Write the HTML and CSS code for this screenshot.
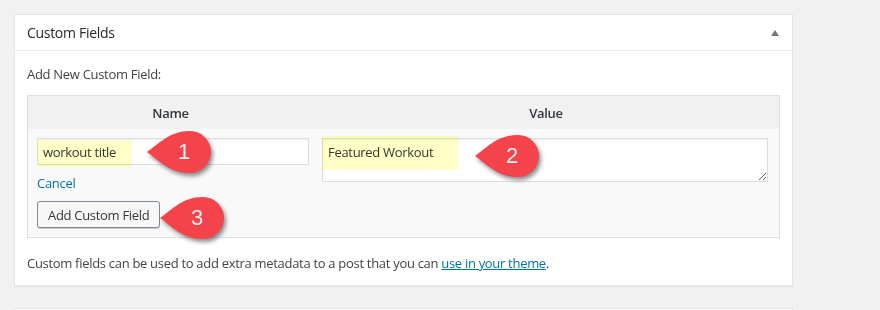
FILE: index.html
```html
<!DOCTYPE html>
<html lang="en">
<head>
    <meta charset="UTF-8">
    <title>Custom Fields</title>
    <link rel="stylesheet" href="styles.css">
</head>
<body>
    <div class="postbox">
        <div class="hndle">
            <h2>Custom Fields</h2>
            <span class="toggle"></span>
        </div>
        <div class="inside">
            <p class="add-label">Add New Custom Field:</p>
            <table class="newmeta">
                <thead>
                    <tr>
                        <th class="col-name">Name</th>
                        <th class="col-value">Value</th>
                    </tr>
                </thead>
                <tbody>
                    <tr>
                        <td class="col-name">
                            <input type="text" class="meta-key" value="workout title">
                            <a href="#" class="cancel">Cancel</a>
                            <button class="button">Add Custom Field</button>
                        </td>
                        <td class="col-value">
                            <textarea class="meta-value">Featured Workout</textarea>
                        </td>
                    </tr>
                </tbody>
            </table>
            <p class="note">Custom fields can be used to add extra metadata to a post that you can <a href="#">use in your theme</a>.</p>
        </div>

        <!-- annotations drawn over the screenshot -->
        <div class="hl hl-1"></div>
        <div class="hl hl-2"></div>
        <div class="callout callout-1">
            <svg viewBox="0 0 64 42" width="64" height="42"><path d="M0 21 C12 13 22 0 43 0 A21 21 0 0 1 43 42 C22 42 12 29 0 21 Z"/></svg>
            <span>1</span>
        </div>
        <div class="callout callout-2">
            <svg viewBox="0 0 64 42" width="64" height="42"><path d="M0 21 C12 13 22 0 43 0 A21 21 0 0 1 43 42 C22 42 12 29 0 21 Z"/></svg>
            <span>2</span>
        </div>
        <div class="callout callout-3">
            <svg viewBox="0 0 64 42" width="64" height="42"><path d="M0 21 C12 13 22 0 43 0 A21 21 0 0 1 43 42 C22 42 12 29 0 21 Z"/></svg>
            <span>3</span>
        </div>
    </div>
    <div class="postbox next"></div>
</body>
</html>
```

FILE: styles.css
```css
body {
    margin: 0;
    padding: 14px 0 0 14px;
    background: #f1f1f1;
    font-family: 'Open Sans', sans-serif;
    font-size: 13px;
    letter-spacing: -0.3px;
    color: #444;
}
.postbox {
    position: relative;
    box-sizing: border-box;
    width: 779px;
    background: #fff;
    border: 1px solid #e5e5e5;
    box-shadow: 0 1px 1px rgba(0, 0, 0, 0.04);
}
.postbox.next {
    margin-top: 22px;
    height: 3px;
    border-bottom: 0;
}
.hndle {
    display: flex;
    align-items: center;
    justify-content: space-between;
    height: 35px;
    padding: 0 13px 0 12px;
    border-bottom: 1px solid #eee;
}
.hndle h2 {
    margin: 0;
    font-size: 14px;
    font-weight: 400;
    color: #23282d;
}
.toggle {
    width: 0;
    height: 0;
    border-left: 4px solid transparent;
    border-right: 4px solid transparent;
    border-bottom: 6px solid #72777c;
}
.inside {
    padding: 13px 12px 12px;
}
.add-label {
    margin: 0 0 11px;
    line-height: 20px;
}
.newmeta {
    width: 100%;
    border: 1px solid #dfdfdf;
    border-collapse: collapse;
    background: #f9f9f9;
}
.newmeta th {
    height: 33px;
    padding: 0;
    background: #f1f1f1;
    font-weight: 600;
    color: #32373c;
}
.newmeta th.col-name {
    width: 285px;
}
.newmeta td {
    vertical-align: top;
    padding: 9px 0 9px 9px;
}
.newmeta td.col-name {
    padding-right: 4px;
}
.newmeta td.col-value {
    padding-right: 11px;
}
.meta-key {
    display: block;
    box-sizing: border-box;
    width: 272px;
    height: 27px;
    margin: 0;
    padding: 2px 5px;
    border: 1px solid #ddd;
    box-shadow: inset 0 1px 2px rgba(0, 0, 0, 0.07);
    font: inherit;
    letter-spacing: inherit;
    color: #32373c;
}
.cancel {
    display: block;
    margin: 9px 0 9px;
    line-height: 18px;
    color: #0073aa;
    text-decoration: none;
}
.button {
    display: block;
    box-sizing: border-box;
    height: 27px;
    padding: 0 10px;
    border: 1px solid #7e8993;
    border-radius: 3px;
    background: #f7f7f7;
    box-shadow: 0 1px 0 #ccc;
    font: inherit;
    letter-spacing: inherit;
    color: #32373c;
    cursor: pointer;
}
.meta-value {
    display: block;
    box-sizing: border-box;
    width: 100%;
    height: 44px;
    margin: 0;
    padding: 4px 5px;
    border: 1px solid #ddd;
    box-shadow: inset 0 1px 2px rgba(0, 0, 0, 0.07);
    font: inherit;
    letter-spacing: inherit;
    color: #32373c;
}
.note {
    margin: 15px 0 0;
    line-height: 20px;
}
.note a {
    color: #0073aa;
}
.hl {
    position: absolute;
    background: rgba(255, 255, 0, 0.22);
    mix-blend-mode: multiply;
    pointer-events: none;
}
.hl-1 { left: 23px; top: 125px; width: 94px; height: 27px; }
.hl-2 { left: 307px; top: 121px; width: 136px; height: 34px; }
.callout {
    position: absolute;
    width: 64px;
    height: 42px;
}
.callout svg {
    display: block;
    fill: #f4434a;
    filter: drop-shadow(2px 3px 2px rgba(0, 0, 0, 0.45));
}
.callout span {
    position: absolute;
    top: 0;
    left: 16px;
    width: 42px;
    line-height: 42px;
    text-align: center;
    font-family: 'Liberation Sans', Arial, sans-serif;
    font-size: 22px;
    letter-spacing: 0;
    color: #f2f2f2;
}
.callout-1 { left: 132px; top: 116px; }
.callout-2 { left: 460px; top: 120px; }
.callout-3 { left: 145px; top: 182px; }
```
